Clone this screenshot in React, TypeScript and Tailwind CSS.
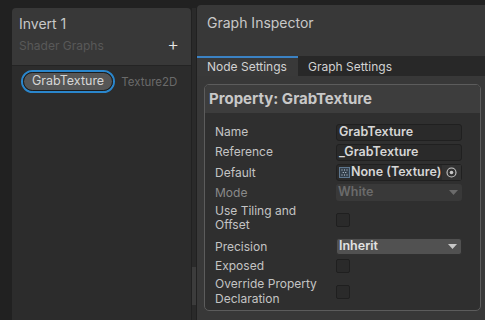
const font = { fontFamily: 'Inter, "Noto Sans", sans-serif' };

function Checkbox() {
  return <div className="w-[14px] h-[14px] rounded-[2px] bg-[#2a2a2a] border border-[#1f1f1f]" />;
}

function Dropdown({ value, dim }: { value: string; dim?: boolean }) {
  return (
    <div
      className={`w-[126px] h-[17px] rounded-[3px] flex items-center justify-between pl-[2px] pr-[4px] text-[12.5px] ${
        dim ? 'bg-[#393939] text-[#6b6b6b] font-semibold' : 'bg-[#515151] text-[#e2e2e2] font-semibold border border-[#303030]'
      }`}
    >
      <span>{value}</span>
      <svg width="9" height="6" viewBox="0 0 9 6">
        <path d="M0 0 H9 L4.5 5 Z" fill={dim ? '#6b6b6b' : '#c8c8c8'} />
      </svg>
    </div>
  );
}

function TextField({ value }: { value: string }) {
  return (
    <div className="w-[126px] h-[17px] rounded-[3px] bg-[#2a2a2a] border border-[#202020] flex items-center pl-[2px] text-[12.5px] font-semibold text-[#d6d6d6]">
      {value}
    </div>
  );
}

export default function App() {
  return (
    <div className="w-[485px] h-[320px] bg-[#212121] flex overflow-hidden text-[#c4c4c4]" style={font}>
      {/* Blackboard */}
      <div className="ml-[12px] mt-[8px] w-[179px] flex flex-col rounded-t-[4px] overflow-hidden">
        <div className="h-[58px] bg-[#383838] border-b border-[#242424] px-[7px] relative">
          <div className="text-[14px] pt-[7px] leading-[18px] text-[#c8c8c8]">Invert 1</div>
          <div className="text-[12px] mt-[5px] leading-[16px] text-[#585858]">Shader Graphs</div>
          <span className="absolute right-[12px] top-[28px] text-[18px] leading-[18px] text-[#e6e6e6] font-light">+</span>
        </div>
        <div className="flex-1 bg-[#2c2c2c] pt-[4px] pl-[9px] flex items-start gap-[6px]">
          <div className="rounded-full border-2 border-[#2a86cc]">
            <div className="rounded-full bg-[#565656] border border-[#1c1c1c] h-[19px] px-[8px] flex items-center text-[12.5px] text-[#d6d6d6]">
              GrabTexture
            </div>
          </div>
          <span className="text-[11.5px] text-[#6a6a6a] mt-[4px]">Texture2D</span>
        </div>
      </div>

      {/* scrollbar */}
      <div className="mt-[8px] w-[4px] ml-[1px] flex flex-col">
        <div className="flex-1 bg-[#2a2a2a]" />
        <div className="h-[38px] bg-[#3c3c3c]" />
        <div className="h-[15px] bg-[#2a2a2a]" />
      </div>

      {/* Graph Inspector */}
      <div className="ml-[1px] mt-[5px] flex-1 flex flex-col rounded-tl-[4px] overflow-hidden bg-[#383838]">
        <div className="h-[51px] px-[10px]">
          <div className="text-[14px] pt-[9px] leading-[18px] text-[#c8c8c8]">Graph Inspector</div>
        </div>
        <div className="h-[20px] bg-[#282828] flex text-[12px] text-[#d2d2d2]">
          <div className="w-[101px] bg-[#393939] border-t-2 border-[#3b82c4] pl-[10px] leading-[17px]">Node Settings</div>
          <div className="pl-[10px] pt-[2px] leading-[17px]">Graph Settings</div>
        </div>
        <div className="flex-1 pt-[8px] pl-[7px] pr-[4px]">
          <div className="h-[227px] rounded-[5px] border border-[#5c5c5c] overflow-hidden bg-[#2f2f2f]">
            <div className="h-[28px] bg-[#3d3d3d] flex items-center pl-[4px] pt-[1px] text-[15px] font-bold text-[#c8c8c8]">
              Property: GrabTexture
            </div>
            <div className="pt-[9px] pl-[10px] text-[12px]">
              <div className="flex items-center h-[20px]">
                <span className="w-[121px]">Name</span>
                <TextField value="GrabTexture" />
              </div>
              <div className="flex items-center h-[20px]">
                <span className="w-[121px]">Reference</span>
                <TextField value="_GrabTexture" />
              </div>
              <div className="flex items-center h-[21px]">
                <span className="w-[121px]">Default</span>
                <div className="w-[126px] h-[17px] rounded-[3px] bg-[#2a2a2a] border border-[#202020] flex items-center text-[12.5px] font-semibold text-[#d6d6d6]">
                  <svg width="11" height="11" viewBox="0 0 11 11" className="ml-[2px] mr-[1px]">
                    <rect x="0.5" y="0.5" width="10" height="10" fill="#34404c" stroke="#5f7890" />
                    <rect x="2.5" y="2.5" width="1" height="1" fill="#c8d4e0" />
                    <rect x="5" y="2.5" width="1" height="1" fill="#c8d4e0" />
                    <rect x="7.5" y="2.5" width="1" height="1" fill="#c8d4e0" />
                    <rect x="3.75" y="5" width="1" height="1" fill="#c8d4e0" />
                    <rect x="6.25" y="5" width="1" height="1" fill="#c8d4e0" />
                    <rect x="2.5" y="7.5" width="1" height="1" fill="#c8d4e0" />
                    <rect x="5" y="7.5" width="1" height="1" fill="#c8d4e0" />
                    <rect x="7.5" y="7.5" width="1" height="1" fill="#c8d4e0" />
                  </svg>
                  <span className="flex-1">None (Texture)</span>
                  <div className="w-[19px] h-full bg-[#323232] flex items-center justify-center">
                    <svg width="11" height="11" viewBox="0 0 11 11">
                      <circle cx="5.5" cy="5.5" r="4.5" fill="none" stroke="#c8c8c8" strokeWidth="1.1" />
                      <circle cx="5.5" cy="5.5" r="1.8" fill="#c8c8c8" />
                    </svg>
                  </div>
                </div>
              </div>
              <div className="flex items-center h-[19px]">
                <span className="w-[121px] text-[#8a8a8a]">Mode</span>
                <Dropdown value="White" dim />
              </div>
              <div className="flex items-start h-[34px]">
                <span className="w-[121px] leading-[14px] pt-[2px]">Use Tiling and<br />Offset</span>
                <div className="mt-[11px]"><Checkbox /></div>
              </div>
              <div className="flex items-center h-[21px]">
                <span className="w-[121px]">Precision</span>
                <Dropdown value="Inherit" />
              </div>
              <div className="flex items-center h-[18px]">
                <span className="w-[121px]">Exposed</span>
                <Checkbox />
              </div>
              <div className="flex items-start h-[30px]">
                <span className="w-[121px] leading-[15px] pt-[1px]">Override Property<br />Declaration</span>
                <div className="mt-[10px]"><Checkbox /></div>
              </div>
            </div>
          </div>
        </div>
      </div>
    </div>
  );
}
